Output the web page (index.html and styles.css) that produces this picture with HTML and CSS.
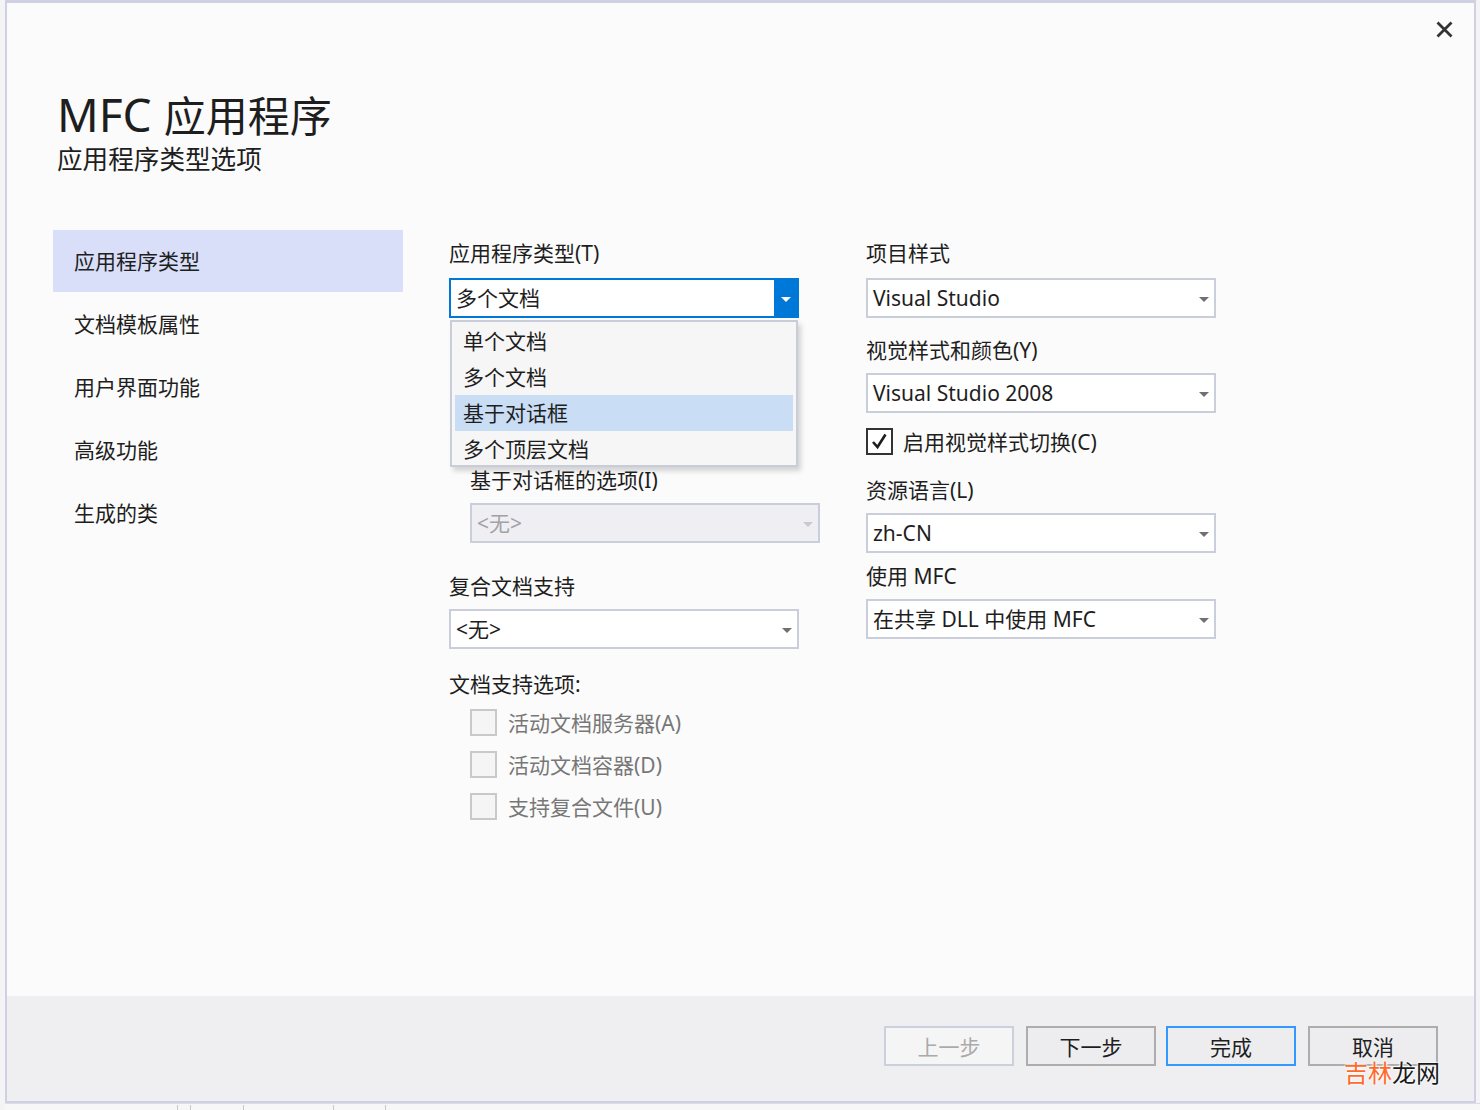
FILE: index.html
```html
<!DOCTYPE html>
<html lang="zh-CN">
<head>
<meta charset="utf-8">
<title>MFC 应用程序</title>
<link rel="stylesheet" href="styles.css">
</head>
<body>
<div class="screen">
  <div class="dialog">
    <button class="close" aria-label="关闭">
      <svg width="17" height="17" viewBox="0 0 17 17"><path d="M1.5 1.5 L15.5 15.5 M15.5 1.5 L1.5 15.5" stroke="#333" stroke-width="2.8" fill="none"/></svg>
    </button>
    <div class="content">
      <header class="header">
        <h1 class="title">MFC <span class="title-cjk">应用程序</span></h1>
        <div class="subtitle">应用程序类型选项</div>
      </header>
      <div class="body">
        <nav class="sidebar">
          <div class="nav-item active">应用程序类型</div>
          <div class="nav-item">文档模板属性</div>
          <div class="nav-item">用户界面功能</div>
          <div class="nav-item">高级功能</div>
          <div class="nav-item">生成的类</div>
        </nav>
        <section class="col col1">
          <div class="label">应用程序类型(T)</div>
          <div class="combo-wrap">
            <div class="combo focused">
              <span class="combo-text">多个文档</span>
              <span class="combo-btn"><span class="tri white"></span></span>
            </div>
            <div class="dropdown">
              <div class="dd-item">单个文档</div>
              <div class="dd-item">多个文档</div>
              <div class="dd-item selected">基于对话框</div>
              <div class="dd-item">多个顶层文档</div>
            </div>
          </div>
          <div class="label indent sp-dialog">基于对话框的选项(I)</div>
          <div class="combo disabled indent sp8">
            <span class="combo-text">&lt;无&gt;</span>
            <span class="tri light"></span>
          </div>
          <div class="label sp28">复合文档支持</div>
          <div class="combo sp8">
            <span class="combo-text">&lt;无&gt;</span>
            <span class="tri"></span>
          </div>
          <div class="label sp20">文档支持选项:</div>
          <div class="check-row disabled indent sp8"><span class="box"></span><span>活动文档服务器(A)</span></div>
          <div class="check-row disabled indent sp12"><span class="box"></span><span>活动文档容器(D)</span></div>
          <div class="check-row disabled indent sp12"><span class="box"></span><span>支持复合文件(U)</span></div>
        </section>
        <section class="col col2">
          <div class="label">项目样式</div>
          <div class="combo sp10">
            <span class="combo-text">Visual Studio</span>
            <span class="tri"></span>
          </div>
          <div class="label sp17">视觉样式和颜色(Y)</div>
          <div class="combo sp8">
            <span class="combo-text">Visual Studio 2008</span>
            <span class="tri"></span>
          </div>
          <div class="check-row sp13">
            <span class="box checked">
              <svg width="19" height="19" viewBox="0 0 19 19"><path d="M3 10 L7.5 15 L15.5 2.5" stroke="#1e1e1e" stroke-width="2.6" fill="none"/></svg>
            </span>
            <span>启用视觉样式切换(C)</span>
          </div>
          <div class="label sp19">资源语言(L)</div>
          <div class="combo sp8">
            <span class="combo-text">zh-CN</span>
            <span class="tri"></span>
          </div>
          <div class="label sp8">使用 MFC</div>
          <div class="combo sp8">
            <span class="combo-text">在共享 DLL 中使用 MFC</span>
            <span class="tri"></span>
          </div>
        </section>
      </div>
    </div>
    <footer class="footer">
      <button class="btn disabled">上一步</button>
      <button class="btn b2">下一步</button>
      <button class="btn primary b3">完成</button>
      <button class="btn b4">取消</button>
      <div class="watermark"><span class="wm-orange">吉林</span>龙网</div>
    </footer>
  </div>
  <div class="taskstrip">
    <span class="sep s1"></span><span class="sep s2"></span><span class="sep s3"></span><span class="sep s4"></span><span class="sep s5"></span>
  </div>
</div>
</body>
</html>
```
FILE: styles.css
```css
* { box-sizing: border-box; }
html, body { margin: 0; padding: 0; }
body {
  background: #f4f4f6;
  font-family: "Noto Sans", "Noto Sans CJK SC", sans-serif;
  color: #1e1e1e;
  width: 1480px;
  height: 1110px;
  overflow: hidden;
}
.screen { padding-left: 5px; }
.dialog {
  position: relative;
  width: 1471px;
  height: 1103px;
  border: 2px solid #cfd1e2;
  border-top-width: 3px;
  background: #fbfbfb;
  display: flex;
  flex-direction: column;
}
.close {
  position: absolute;
  top: 15px;
  right: 18px;
  width: 23px;
  height: 23px;
  padding: 3px;
  border: 0;
  background: transparent;
}
.close svg { display: block; }
.content { flex: 1; }
.header { padding: 84px 0 0 50px; }
.title {
  margin: 0;
  font-weight: 400;
  font-size: 46px;
  line-height: 55px;
  color: #1e1e1e;
}
.title-cjk { font-size: 42px; }
.subtitle {
  font-size: 25.6px;
  line-height: 32px;
  margin-top: 1px;
  color: #1e1e1e;
}
.body {
  display: flex;
  margin-top: 54px;
  padding-left: 46px;
}
.sidebar { width: 350px; display: flex; flex-direction: column; }
.nav-item {
  height: 63px;
  line-height: 63px;
  padding-left: 21px;
  font-size: 21px;
  color: #1e1e1e;
}
.nav-item.active { background: #d9dff8; height: 62px; line-height: 62px; margin-bottom: 1px; }
.col { display: flex; flex-direction: column; padding-top: 8px; }
.col1 { width: 370px; margin-left: 46px; }
.col2 { width: 350px; margin-left: 47px; }
.label { font-size: 21px; line-height: 30px; height: 30px; white-space: nowrap; }
.indent { margin-left: 21px; }
.sp8 { margin-top: 8px; }
.sp10 { margin-top: 10px; }
.sp12 { margin-top: 12px; }
.sp13 { margin-top: 13px; }
.sp17 { margin-top: 17px; }
.sp19 { margin-top: 19px; }
.sp20 { margin-top: 20px; }
.sp28 { margin-top: 28px; }
.sp-dialog { margin-top: 147px; }
.combo-wrap { position: relative; margin-top: 10px; width: 350px; }
.combo {
  width: 350px;
  height: 40px;
  border: 2px solid #cacdda;
  background: #ffffff;
  display: flex;
  align-items: center;
  justify-content: space-between;
  padding: 0 4px 0 5px;
  font-size: 21px;
}
.combo-text { line-height: 36px; white-space: nowrap; }
.combo.focused { border-color: #0078d7; padding-right: 0; }
.combo-btn {
  width: 23px;
  height: 36px;
  background: #0078d7;
  display: flex;
  align-items: center;
  justify-content: center;
}
.combo.disabled { background: #efeff3; color: #a2a2a6; }
.tri {
  width: 0; height: 0;
  border-left: 5px solid transparent;
  border-right: 5px solid transparent;
  border-top: 5px solid #707070;
  margin-right: 1px;
  margin-top: 2px;
}
.tri.white { border-top-color: #ffffff; margin: 2px 0 0 0; }
.tri.light { border-top-color: #c9c9cf; }
.dropdown {
  position: absolute;
  top: 42px;
  left: 1px;
  width: 348px;
  height: 147px;
  background: #f6f6f6;
  border: 2px solid #c9ccd9;
  padding: 1px 3px 2px;
  box-shadow: 3px 4px 5px rgba(0, 0, 0, 0.16);
  z-index: 5;
}
.dd-item {
  height: 36px;
  line-height: 36px;
  padding-left: 8px;
  font-size: 21px;
  color: #1e1e1e;
}
.dd-item.selected { background: #c9ddf5; }
.check-row {
  display: flex;
  align-items: center;
  height: 30px;
  font-size: 21px;
  white-space: nowrap;
}
.box {
  width: 27px;
  height: 27px;
  border: 2px solid #c9c9c9;
  background: #f5f5f5;
  margin-right: 11px;
  display: flex;
  align-items: center;
  justify-content: center;
  flex: none;
}
.box.checked { border-color: #333333; background: #ffffff; margin-right: 10px; }
.check-row.disabled { color: #777777; }
.footer {
  height: 105px;
  background: #efeff2;
  display: flex;
  align-items: flex-start;
  padding: 30px 0 0 877px;
  position: relative;
}
.btn {
  width: 130px;
  height: 40px;
  border: 2px solid #adadad;
  background: #ededf0;
  font-family: "Noto Sans CJK SC", "Noto Sans", sans-serif;
  font-size: 21px;
  color: #1e1e1e;
  padding: 0;
  line-height: 34px;
}
.btn.disabled { border-color: #ccd0dc; background: #f5f5f6; color: #aaaaaa; }
.b2 { margin-left: 12px; }
.b3 { margin-left: 10px; }
.b4 { margin-left: 12px; }
.btn.primary { border-color: #3399ff; }
.watermark {
  position: absolute;
  right: 34px;
  top: 62px;
  font-family: "Noto Sans CJK SC", sans-serif;
  font-size: 24px;
  line-height: 28px;
  color: #1a1a1a;
  text-shadow: 0 0 2px #ffffff, 0 0 2px #ffffff, 0 0 3px #ffffff;
}
.wm-orange { color: #ff6a2a; }
.taskstrip {
  height: 7px;
  border-top: 1px solid #dcdde6;
  background: #f7f7f8;
  position: relative;
}
.sep { position: absolute; top: 1px; width: 1px; height: 6px; background: #c8c8c8; }
.s1 { left: 172px; }
.s2 { left: 185px; }
.s3 { left: 238px; }
.s4 { left: 328px; }
.s5 { left: 380px; }
```
